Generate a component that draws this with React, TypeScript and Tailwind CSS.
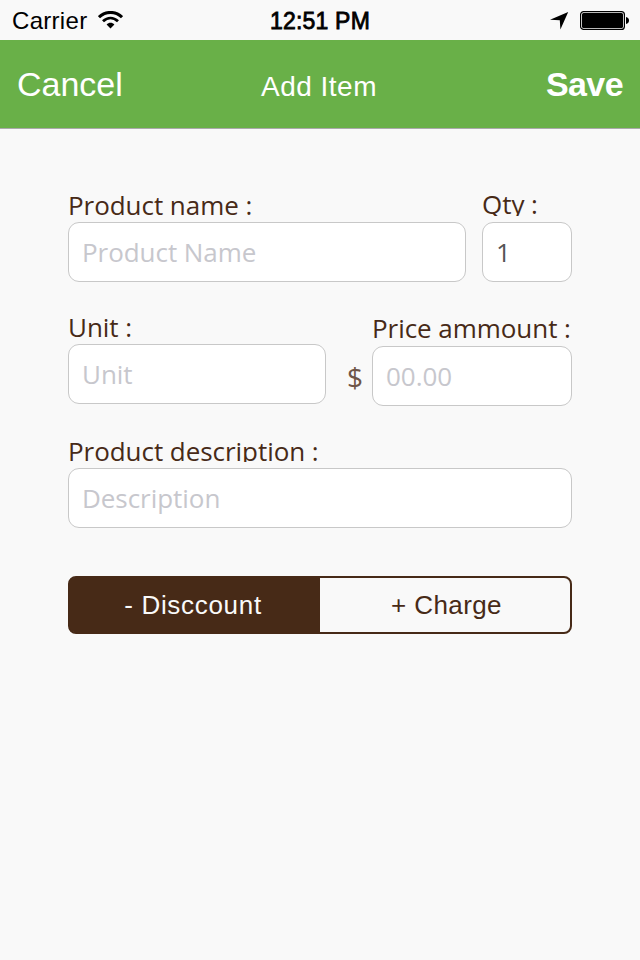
import type { ReactNode } from "react";

const humanist = "font-['Open_Sans','Noto_Sans',sans-serif] tracking-[-0.05px]";
const field =
  "block h-[60px] rounded-[11px] border border-[#c8c8c8] bg-white pl-[13px] pr-2 text-[26px] text-[#555] outline-none placeholder:text-[#c7c7cd] placeholder:opacity-100 " +
  humanist;

function Label({ className, children }: { className: string; children: ReactNode }) {
  return (
    <label className={`block whitespace-nowrap text-[26px] leading-[36px] text-[#472a17] ${humanist} ${className}`}>
      {children}
    </label>
  );
}

function StatusBar() {
  return (
    <div className="grid h-10 grid-cols-3 items-center text-black">
      <div className="flex items-center pl-3">
        <span className="text-[24px] leading-[38px] pt-[2px] tracking-[0.3px]">Carrier</span>
        <svg className="ml-[11px] h-[18px] w-[25px]" viewBox="0 0 25 18" fill="none" stroke="#000">
          <path d="M1 6.2C7.6-.2 17.4-.2 24 6.2" strokeWidth="3" />
          <path d="M5 10.3c4.6-4.3 10.4-4.3 15 0" strokeWidth="2.8" />
          <path d="M8.6 13.6c2.2-2.4 5.6-2.4 7.8 0L12.5 17.6Z" fill="#000" stroke="none" />
        </svg>
      </div>
      <div className="whitespace-nowrap pt-[2px] text-center text-[23px] leading-[38px] tracking-[0.2px] [-webkit-text-stroke:0.8px_#000]">12:51 PM</div>
      <div className="flex items-center justify-end pr-[11px]">
        <svg className="mr-[11px] h-[19px] w-[19px]" viewBox="0 0 19 19">
          <path d="M18.2 1 10.4 18.5 9.8 9.3 0 8.7Z" fill="#000" />
        </svg>
        <svg className="h-[19px] w-[49px]" viewBox="0 0 49 19">
          <rect x=".6" y=".6" width="43.8" height="17.8" rx="3" fill="none" stroke="#000" strokeWidth="1.2" />
          <rect x="2" y="2" width="41" height="15" rx="1.5" fill="#000" />
          <path d="M46 6c4 .5 4 6.5 0 7Z" fill="#000" />
        </svg>
      </div>
    </div>
  );
}

export default function App() {
  return (
    <div className="h-[960px] w-[640px] overflow-hidden bg-[#f9f9f9] font-['Liberation_Sans',Arial,sans-serif]">
      <StatusBar />
      <header className="grid h-[89px] grid-cols-3 border-b border-[#aaa] bg-[#69b048] text-white">
        <button className="pb-[6px] pl-[17px] text-left text-[34px] leading-[82px]">Cancel</button>
        <h1 className="pr-[2px] text-center text-[28px] leading-[93px] tracking-[0.5px]">Add Item</h1>
        <button className="pb-[6px] pr-[17px] text-right text-[34px] font-bold leading-[82px] tracking-[-0.6px]">Save</button>
      </header>
      <main className="px-[68px] pt-[57px]">
        <div className="flex h-[123px] gap-4">
          <div className="w-[398px] pt-px">
            <Label className="mb-[6px] h-[29px]">Product name :</Label>
            <input className={`${field} w-full`} placeholder="Product Name" />
          </div>
          <div className="w-[90px]">
            <Label className="mb-[6px] h-[30px] overflow-hidden">Qty :</Label>
            <input className={`${field} w-full`} defaultValue="1" />
          </div>
        </div>
        <div className="flex h-[124px]">
          <div className="w-[258px]">
            <Label className="mb-[6px] h-[29px]">Unit :</Label>
            <input className={`${field} w-full`} placeholder="Unit" />
          </div>
          <div className={`w-[46px] pl-[21px] pt-[49px] text-[28px] leading-[38px] text-[#6f5547] ${humanist}`}>$</div>
          <div className="w-[200px] pt-px">
            <Label className="mb-[7px] h-[29px]">Price ammount :</Label>
            <input className={`${field} w-full`} placeholder="00.00" />
          </div>
        </div>
        <Label className="mb-[6px] h-[29px] overflow-hidden">Product description :</Label>
        <input className={`${field} w-full`} placeholder="Description" />
        <div className="mt-12 flex h-[58px] rounded-[8px] border-2 border-[#472a17] text-[26px] leading-[54px]">
          <button className="-ml-px w-[251px] rounded-l-[5px] bg-[#472a17] pr-[3px] tracking-[0.7px] text-[#f9f9f9]">- Disccount</button>
          <button className="flex-1 pl-[3px] tracking-[0.4px] text-[#472a17]">+ Charge</button>
        </div>
      </main>
    </div>
  );
}
